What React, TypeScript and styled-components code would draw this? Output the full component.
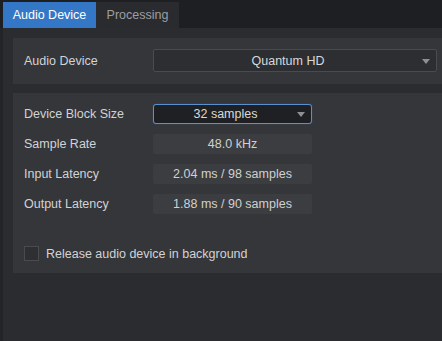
import styled, { createGlobalStyle } from 'styled-components';

const GlobalStyle = createGlobalStyle`
  html, body {
    margin: 0;
    padding: 0;
    background: #2b2c2f;
  }
  body {
    font-family: "Liberation Sans", Arial, sans-serif;
    font-size: 12px;
  }
`;

const Window = styled.div`
  width: 442px;
  height: 341px;
  display: flex;
  flex-direction: column;
  background: #2b2c2f;
  overflow: hidden;
`;

const TabBar = styled.div`
  height: 28px;
  display: flex;
  align-items: flex-end;
  padding-left: 3px;
  background: #1e1f22;
  flex-shrink: 0;
`;

const Tab = styled.div<{ $active?: boolean }>`
  height: 26px;
  box-sizing: border-box;
  width: ${({ $active }) => ($active ? '93px' : '83px')};
  display: flex;
  align-items: center;
  justify-content: center;
  padding-bottom: 1px;
  font-size: 12.5px;
  color: ${({ $active }) => ($active ? '#ffffff' : '#9d9ea1')};
  background: ${({ $active }) => ($active ? '#3377c6' : '#2a2b2e')};
`;

const Body = styled.div`
  flex: 1;
  display: flex;
  flex-direction: column;
  gap: 9px;
  padding: 10px 0 0 10px;
  border-left: 3px solid #232427;
`;

const Panel = styled.div`
  background: #35363a;
  display: flex;
  flex-direction: column;
`;

const DevicePanel = styled(Panel)`
  height: 46px;
  justify-content: center;
  padding: 0 5px 1px 11px;
  box-sizing: border-box;
`;

const SettingsPanel = styled(Panel)`
  height: 180px;
  padding: 11px 0 0 11px;
  box-sizing: border-box;
`;

const Row = styled.div<{ $tall?: boolean }>`
  display: flex;
  align-items: center;
  height: ${({ $tall }) => ($tall ? '23px' : '20px')};
  margin-bottom: ${({ $tall }) => ($tall ? '0' : '10px')};
`;

const Label = styled.div`
  width: 129px;
  color: #d2d3d5;
  font-size: 12.5px;
  flex-shrink: 0;
`;

const Select = styled.div<{ $focused?: boolean; $wide?: boolean }>`
  position: relative;
  box-sizing: border-box;
  height: ${({ $wide }) => ($wide ? '23px' : '20px')};
  width: ${({ $wide }) => ($wide ? '284px' : '159px')};
  display: flex;
  align-items: center;
  justify-content: center;
  padding-right: 14px;
  color: #d8d9db;
  font-size: 12.5px;
  background: ${({ $focused }) => ($focused ? '#1f2023' : '#2d2e31')};
  border: 1px solid ${({ $focused }) => ($focused ? '#5b8fd0' : '#4a4b4f')};
  border-radius: ${({ $focused }) => ($focused ? '3px' : '2px')};
  box-shadow: ${({ $focused }) => ($focused ? '0 0 1px rgba(91,143,208,0.6)' : 'none')};
`;

const Arrow = styled.span`
  position: absolute;
  right: 6px;
  top: 50%;
  margin-top: -2px;
  width: 0;
  height: 0;
  border-left: 4px solid transparent;
  border-right: 4px solid transparent;
  border-top: 5px solid #8e8f92;
`;

const Value = styled.div`
  box-sizing: border-box;
  width: 159px;
  height: 20px;
  display: flex;
  align-items: center;
  justify-content: center;
  color: #cfd0d2;
  font-size: 12.5px;
  background: #3c3d41;
  border-radius: 2px;
`;

const CheckRow = styled.label`
  display: flex;
  align-items: center;
  gap: 7px;
  margin-top: 22px;
  color: #d2d3d5;
  font-size: 12.5px;
`;

const CheckBox = styled.span`
  width: 15px;
  height: 15px;
  box-sizing: border-box;
  border: 1px solid #4a4b4f;
  background: #2e2f32;
`;

const readouts = [
  { label: 'Sample Rate', value: '48.0 kHz' },
  { label: 'Input Latency', value: '2.04 ms / 98 samples' },
  { label: 'Output Latency', value: '1.88 ms / 90 samples' },
];

export default function App() {
  return (
    <>
      <GlobalStyle />
      <Window>
        <TabBar>
          <Tab $active>Audio Device</Tab>
          <Tab>Processing</Tab>
        </TabBar>
        <Body>
          <DevicePanel>
            <Row $tall>
              <Label>Audio Device</Label>
              <Select $wide>
                Quantum HD
                <Arrow />
              </Select>
            </Row>
          </DevicePanel>
          <SettingsPanel>
            <Row>
              <Label>Device Block Size</Label>
              <Select $focused>
                32 samples
                <Arrow />
              </Select>
            </Row>
            {readouts.map((r) => (
              <Row key={r.label}>
                <Label>{r.label}</Label>
                <Value>{r.value}</Value>
              </Row>
            ))}
            <CheckRow>
              <CheckBox />
              Release audio device in background
            </CheckRow>
          </SettingsPanel>
        </Body>
      </Window>
    </>
  );
}
